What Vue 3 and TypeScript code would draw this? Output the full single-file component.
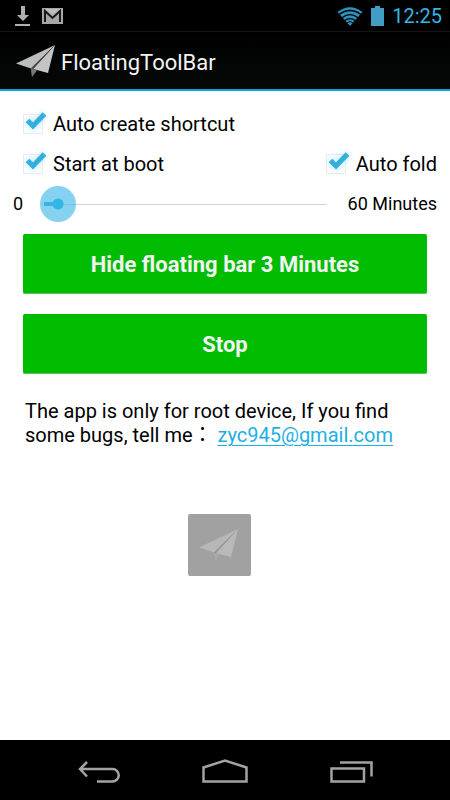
<script setup lang="ts">
import { ref } from 'vue'

const autoShortcut = ref(true)
const startAtBoot = ref(true)
const autoFold = ref(true)
const minutes = ref(3)
const maxMinutes = 60
</script>

<template>
  <div class="screen">
    <div class="status">
      <div class="status-group">
        <svg class="icon-download" viewBox="0 0 16 22" aria-hidden="true">
          <path d="M6 1h4v9h4l-6 6l-6 -6h4zM0 19h15v2H0z" fill="#b0b0b0" />
        </svg>
        <svg class="icon-mail" viewBox="0 0 21 16" aria-hidden="true">
          <path d="M0 0h21v16H0z" fill="#a6a6a6" />
          <path d="M3 14V3l7.500 7L18 3v11" fill="none" stroke="#181818" stroke-width="2" />
          <path d="M3 1h15l-7.500 6z" fill="#bdbdbd" />
        </svg>
      </div>
      <div class="status-group">
        <svg class="icon-wifi" viewBox="0 0 26 20" aria-hidden="true">
          <path d="M0.500 6Q13 -3.500 25.500 6L13 20z" fill="#2d93be" />
          <g fill="none" stroke="#000" stroke-width="1.300">
            <path d="M2 8.500Q13 0.500 24 8.500" />
            <path d="M5 11.700Q13 5.500 21 11.700" />
            <path d="M7.500 14.800Q13 10.500 18.500 14.800" />
            <path d="M9.500 17Q13 14 16.500 17" stroke-width="1" />
          </g>
        </svg>
        <svg class="icon-battery" viewBox="0 0 13 20" aria-hidden="true">
          <path d="M4 0h5v2h4v18H0V2h4z" fill="#419dc4" />
        </svg>
        <span class="clock">12:25</span>
      </div>
    </div>

    <header class="app-bar">
      <svg class="plane" viewBox="0 0 40 34" aria-hidden="true">
        <path d="M39 1L0 19.500L15 24.500z" fill="#bdbdbd" />
        <path d="M39 1L17 25L32 29z" fill="#c4c4c4" />
        <path d="M39 1L15 24.500L16 33L17 25z" fill="#4a4a4a" />
        <path d="M15 24.500L16 33L21 26.500L17 25z" fill="#777" />
      </svg>
      <h1>FloatingToolBar</h1>
    </header>

    <main class="content">
      <div class="row options">
        <label class="check">
          <span class="tick">
            <input v-model="autoShortcut" type="checkbox" />
            <svg v-if="autoShortcut" viewBox="0 0 26 26" aria-hidden="true">
              <path d="M4.500 10.500L10 16L21.500 4" />
            </svg>
          </span>
          Auto create shortcut
        </label>
      </div>
      <div class="row options">
        <label class="check">
          <span class="tick">
            <input v-model="startAtBoot" type="checkbox" />
            <svg v-if="startAtBoot" viewBox="0 0 26 26" aria-hidden="true">
              <path d="M4.500 10.500L10 16L21.500 4" />
            </svg>
          </span>
          Start at boot
        </label>
        <label class="check">
          <span class="tick">
            <input v-model="autoFold" type="checkbox" />
            <svg v-if="autoFold" viewBox="0 0 26 26" aria-hidden="true">
              <path d="M4.500 10.500L10 16L21.500 4" />
            </svg>
          </span>
          Auto fold
        </label>
      </div>
      <div class="row range">
        <label for="minutes">0</label>
        <input
          id="minutes"
          v-model.number="minutes"
          type="range"
          min="0"
          :max="maxMinutes"
          :style="{ '--ratio': minutes / maxMinutes }"
        />
        <label for="minutes">{{ maxMinutes }} Minutes</label>
      </div>

      <div class="actions">
        <button type="button">Hide floating bar {{ minutes }} Minutes</button>
        <button type="button">Stop</button>
      </div>

      <p class="note">
        The app is only for root device, If you find some bugs, tell me：
        <a href="mailto:zyc945@gmail.com">zyc945@gmail.com</a>
      </p>

      <button class="floating" type="button" aria-label="Floating toolbar">
        <svg class="plane" viewBox="0 0 40 34" aria-hidden="true">
          <path d="M39 1L0 19.500L15 24.500z" fill="#b7b7b7" />
          <path d="M39 1L17 25L32 29z" fill="#b9b9b9" />
          <path d="M39 1L15 24.500L16 33L17 25z" fill="#949494" />
          <path d="M15 24.500L16 33L21 26.500L17 25z" fill="#a9a9a9" />
        </svg>
      </button>
    </main>

    <nav class="nav">
      <button type="button" aria-label="Back">
        <svg viewBox="0 0 48 26" aria-hidden="true">
          <path d="M5 12H37.500a6.200 6.200 0 0 1 0 12.500H22M12 5L5 12L12 19.500" />
        </svg>
      </button>
      <button type="button" aria-label="Home">
        <svg viewBox="0 0 48 26" aria-hidden="true">
          <path d="M2.500 10.500L24 3.500L45.500 10.500V24.500H2.500z" />
        </svg>
      </button>
      <button type="button" aria-label="Recent apps">
        <svg viewBox="0 0 48 26" aria-hidden="true">
          <path d="M4.500 11.500H37V24.500H4.500zM13 5.500H44.500V19.500" />
        </svg>
      </button>
    </nav>
  </div>
</template>

<style>
body {
  margin: 0;
}
</style>

<style scoped>
.screen {
  display: flex;
  flex-direction: column;
  min-height: 100vh;
  background: #fff;
  color: #000;
  font-family: Roboto, 'Noto Sans CJK JP', sans-serif;
  font-size: 20px;
  line-height: 24px;
}

button {
  border: 0;
  padding: 0;
  font: inherit;
  cursor: pointer;
}

.status {
  display: flex;
  justify-content: space-between;
  align-items: center;
  height: 31px;
  padding: 0 8px 0 15px;
  background: #000;
  border-bottom: 1px solid #141414;
}

.status-group {
  display: flex;
  align-items: center;
  gap: 8px;
}

.icon-download {
  width: 16px;
  height: 22px;
  margin-right: 3px;
}

.icon-mail {
  width: 21px;
  height: 16px;
}

.icon-wifi {
  width: 26px;
  height: 20px;
}

.icon-battery {
  width: 13px;
  height: 20px;
}

.clock {
  color: #33b5e5;
}

.app-bar {
  display: flex;
  align-items: center;
  gap: 5px;
  height: 57px;
  padding: 0 16px;
  background: linear-gradient(#000, #060808);
  border-bottom: 2px solid #0ba5dc;
}

.plane {
  display: block;
  width: 40px;
  height: 34px;
}

h1 {
  margin: 0;
  padding-top: 4px;
  color: #f3f3f3;
  font-size: 22px;
  font-weight: 400;
  line-height: 28px;
}

.content {
  flex: 1;
  display: flex;
  flex-direction: column;
  padding: 13px 13px 24px;
}

.row {
  display: flex;
  align-items: center;
  min-height: 40px;
}

.options {
  justify-content: space-between;
  padding-left: 10px;
}

.check {
  display: flex;
  align-items: center;
  gap: 10px;
}

.tick {
  position: relative;
  display: block;
  width: 20px;
  height: 20px;
}

.tick input {
  appearance: none;
  display: block;
  box-sizing: border-box;
  width: 20px;
  height: 20px;
  margin: 0;
  border: 1px solid #ebebeb;
  background: #fcfeff;
}

.tick svg {
  position: absolute;
  top: -4px;
  left: 0;
  width: 26px;
  height: 26px;
  overflow: visible;
  pointer-events: none;
  fill: none;
  stroke: #34aedd;
  stroke-width: 5px;
  filter: drop-shadow(0 0 3px #a5e4fb);
}

.range {
  gap: 3px;
  font-size: 18px;
}

.range input {
  appearance: none;
  flex: 1;
  min-width: 0;
  height: 36px;
  margin: 0;
  background:
    linear-gradient(#33b5e5, #33b5e5) 18px center / calc((100% - 36px) * var(--ratio)) 4px no-repeat,
    linear-gradient(#d5d5d5, #d5d5d5) 18px center / calc(100% - 36px) 1px no-repeat;
}

.range input::-webkit-slider-thumb {
  appearance: none;
  width: 36px;
  height: 36px;
  border-radius: 50%;
  background: radial-gradient(circle, #33b5e5 5px, rgba(51, 181, 229, 0.6) 6px);
}

.actions {
  display: flex;
  flex-direction: column;
  gap: 20px;
  padding: 10px 10px 0;
}

.actions button {
  height: 60px;
  padding-top: 2px;
  border-radius: 2px;
  background: #00bc00;
  box-shadow: inset 0 -1px #58c458;
  color: #f3f3f3;
  font-size: 22px;
  font-weight: 700;
}

.note {
  margin: 25px 12px 0;
}

.note a {
  color: #1fb0e2;
  text-decoration-thickness: 1px;
  text-underline-offset: 3px;
}

.floating {
  display: flex;
  align-items: center;
  justify-content: center;
  align-self: center;
  width: 63px;
  height: 62px;
  margin: 67px 12px 0 0;
  border-radius: 2px;
  background: #a1a1a1;
}

.nav {
  display: flex;
  justify-content: center;
  gap: 78px;
  height: 60px;
  background: #000;
}

.nav button {
  display: flex;
  align-items: center;
  background: transparent;
}

.nav svg {
  width: 48px;
  height: 26px;
  fill: none;
  stroke: #a3a3a3;
  stroke-width: 2.5;
}
</style>
